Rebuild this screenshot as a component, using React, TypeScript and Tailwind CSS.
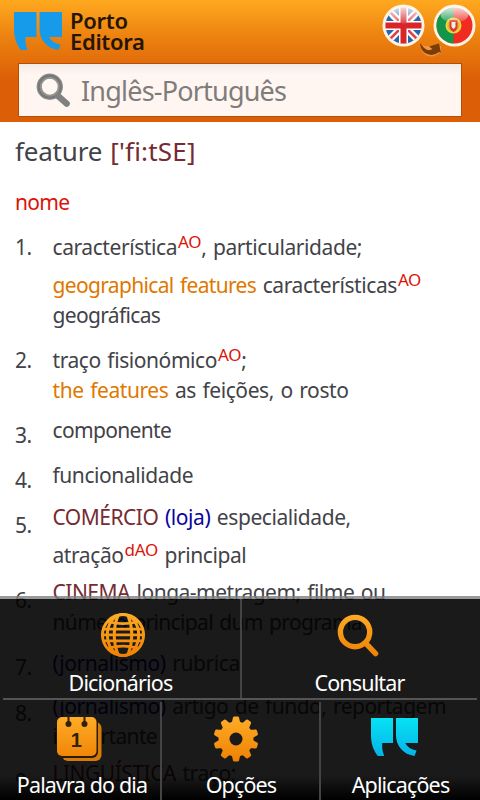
import type { ReactNode } from "react";

type Line = { space: string; content: ReactNode };
type Entry = { number: string; space: string; numberSpace: string; lines: Line[] };

const Mark = ({ children }: { children: ReactNode }) => (
  <sup className="top-0 ml-px align-[7px] text-[17px] leading-none tracking-[-0.3px] text-[#dc1408]">{children}</sup>
);
const Example = ({ children }: { children: ReactNode }) => (
  <span className="text-[#de7800]">{children}</span>
);
const Domain = ({ children }: { children: ReactNode }) => (
  <span className="tracking-[-0.5px] text-[#762b32]">{children}</span>
);
const Context = ({ children }: { children: ReactNode }) => (
  <span className="text-[#0c04a0]">{children}</span>
);
const Tight = ({ children }: { children: ReactNode }) => (
  <span className="tracking-[-0.66px]">{children}</span>
);

const entries: Entry[] = [
  {
    number: "1.",
    space: "",
    numberSpace: "",
    lines: [
      { space: "", content: <>característica<Mark>AO</Mark>, particularidade;</> },
      {
        space: "mt-2",
        content: <><Tight><Example>geographical features</Example></Tight> características<Mark>AO</Mark></>,
      },
      { space: "", content: <Tight>geográficas</Tight> },
    ],
  },
  {
    number: "2.",
    space: "mt-[15px]",
    numberSpace: "",
    lines: [
      { space: "", content: <>traço fisionómico<Mark>AO</Mark>;</> },
      { space: "", content: <><Example>the features</Example> as feições, o rosto</> },
    ],
  },
  {
    number: "3.",
    space: "mt-[10px]",
    numberSpace: "mt-[5px]",
    lines: [{ space: "", content: <Tight>componente</Tight> }],
  },
  { number: "4.", space: "mt-[10px]", numberSpace: "mt-[5px]", lines: [{ space: "", content: "funcionalidade" }] },
  {
    number: "5.",
    space: "mt-[7px]",
    numberSpace: "mt-2",
    lines: [
      { space: "", content: <><Domain>COMÉRCIO</Domain> <Context>(loja)</Context> especialidade,</> },
      { space: "mt-2", content: <>atração<Mark>dAO</Mark> principal</> },
    ],
  },
  {
    number: "6.",
    space: "mt-[7px]",
    numberSpace: "mt-2",
    lines: [
      { space: "", content: <><Domain>CINEMA</Domain> <span className="tracking-[-0.5px]">longa-metragem; filme ou</span></> },
      { space: "", content: <Tight>número principal dum programa</Tight> },
    ],
  },
  {
    number: "7.",
    space: "mt-[11px]",
    numberSpace: "mt-1",
    lines: [{ space: "", content: <><Context>(jornalismo)</Context> rubrica</> }],
  },
  {
    number: "8.",
    space: "mt-[9px]",
    numberSpace: "mt-[7px]",
    lines: [
      { space: "", content: <><Context>(jornalismo)</Context> <span className="tracking-[-0.5px]">artigo de fundo, reportagem</span></> },
      { space: "", content: <Tight>importante</Tight> },
    ],
  },
  {
    number: "9.",
    space: "mt-[7px]",
    numberSpace: "mt-2",
    lines: [{ space: "", content: <><Domain>LINGUÍSTICA</Domain> traço;</> }],
  },
];

function Quotes({ className, fill }: { className: string; fill: string }) {
  return (
    <svg className={className} viewBox="0 0 48 38" preserveAspectRatio="none" fill={fill}>
      <defs>
        <linearGradient id="cyan" gradientUnits="userSpaceOnUse" x1="0" y1="0" x2="0" y2="38">
          <stop stopColor="#08e2f4" />
          <stop offset="1" stopColor="#04b4e8" />
        </linearGradient>
      </defs>
      <path d="M0 0H22.5V25H11.5C11 30 12 34 13.5 38H7C2 32 0 25 0 17Z" />
      <path d="M25.5 0H48V25H35C37 29 41 31.500 46.500 32.500L44.500 38C33 36.500 25.500 28 25.500 17Z" />
    </svg>
  );
}

function Flags() {
  return (
    <svg className="h-[62px] w-[105px]" viewBox="375 0 105 62">
      <defs>
        <clipPath id="uk"><circle cx="403.500" cy="25.500" r="18" /></clipPath>
        <clipPath id="pt"><circle cx="454.500" cy="25.500" r="18" /></clipPath>
        <linearGradient id="gloss" x2="0" y2="1">
          <stop stopColor="#fff" stopOpacity=".85" />
          <stop offset="1" stopColor="#fff" stopOpacity=".15" />
        </linearGradient>
      </defs>
      <circle cx="403.500" cy="25.500" r="21" fill="#fff4e4" />
      <g clipPath="url(#uk)">
        <path d="M385 7h37v37h-37z" fill="#2866ab" />
        <path d="M386 8 421 43M421 8 386 43" stroke="#fff" strokeWidth="7" />
        <path d="M386 8 421 43M421 8 386 43" stroke="#df4548" strokeWidth="2.500" />
        <path d="M385 25.500h37M403.500 7v37" stroke="#fff" strokeWidth="9" />
        <path d="M385 25.500h37M403.500 7v37" stroke="#d92428" strokeWidth="6" />
      </g>
      <ellipse cx="403.500" cy="15" rx="14" ry="8.500" fill="url(#gloss)" />
      <circle cx="454.500" cy="25.500" r="21" fill="#fff4e4" />
      <g clipPath="url(#pt)">
        <path d="M436 7h37v37h-37z" fill="#ef2b22" />
        <path d="M436 7h17.500v37H436z" fill="#14964a" />
      </g>
      <circle cx="453.500" cy="25.500" r="7" fill="#d9b62c" stroke="#ecd43c" strokeWidth="2" />
      <path d="M449.500 20h8v7q-1 4-4 5-3-1-4-5z" fill="#df382e" />
      <path d="M451.500 22h4v5l-2 2-2-2z" fill="#e9eee9" />
      <ellipse cx="454.500" cy="14.500" rx="14" ry="8" fill="url(#gloss)" />
      <path d="M420 46q2 8 8 10 7 1.500 11-3l2 1V46z" fill="#f9bd80" opacity=".45" />
      <path d="M420 43q0 7 6 10.500 7 3.500 13-1.500l2 1-2-9.500-10 3 3.500 2.500q-6 4-12.500-6z" fill="#7b3d08" />
    </svg>
  );
}

function Header() {
  return (
    <header className="h-[122px] bg-linear-to-b from-[#ffa91f] via-[#ec820f] via-30% to-[#dc5f08] to-65%">
      <div className="flex h-[63px] justify-between">
        <div className="flex pl-[14px]">
          <Quotes className="mt-3 h-[38px] w-12" fill="#169bea" />
          <div className="mt-[10px] ml-2 text-[22px] leading-[21px] font-semibold tracking-[-0.3px] text-[#251504]">
            <p>Porto</p>
            <p>Editora</p>
          </div>
        </div>
        <Flags />
      </div>
      <div className="mx-[18px] flex h-[54px] items-center border border-[#b24f08] bg-linear-to-b from-[#f3ebe7] to-[#fff6f2] to-20%">
        <svg className="mt-1 ml-4 h-[38px] w-[38px]" viewBox="0 0 36 36" fill="none">
          <circle cx="14" cy="13" r="10" stroke="#929292" strokeWidth="5" />
          <circle cx="14" cy="13" r="10.500" stroke="#777" strokeWidth="2" />
          <path d="m22 22 8 7" stroke="#808080" strokeWidth="6" strokeLinecap="round" />
        </svg>
        <span className="mt-0.5 ml-2 text-[27px] tracking-[-0.8px] text-[#7f7c7a]">Inglês-Português</span>
      </div>
    </header>
  );
}

function Gradient() {
  return (
    <defs>
      <linearGradient id="orange" gradientUnits="userSpaceOnUse" x1="0" y1="0" x2="0" y2="46">
        <stop stopColor="#ffad28" />
        <stop offset="1" stopColor="#ee8003" />
      </linearGradient>
    </defs>
  );
}

function GlobeIcon() {
  return (
    <svg className="ml-0.5 h-[46px] w-[46px]" viewBox="0 0 46 46" fill="none" stroke="url(#orange)" strokeWidth="3">
      <Gradient />
      <circle cx="23" cy="23.500" r="21" />
      <ellipse cx="23" cy="23.500" rx="16" ry="21" />
      <path d="M18 3q-8 20 0 41M28 3q8 20 0 41" />
      <path d="M8 10q15 4 30 0M3.500 17.500h39v.1M2 23.500h42v.1M3.500 29.500h39v.1M8 37q15-4 30 0" strokeWidth="2.800" />
    </svg>
  );
}

function SearchIcon() {
  return (
    <svg className="mr-1 h-[46px] w-[46px]" viewBox="0 0 46 46" fill="none" stroke="url(#orange)">
      <circle cx="20" cy="20.500" r="15" strokeWidth="5.500" />
      <path d="m31 32 10 10.500" strokeWidth="5.500" strokeLinecap="round" />
    </svg>
  );
}

function CalendarIcon() {
  return (
    <svg className="mr-0.5 h-[46px] w-[46px]" viewBox="0 0 46 46">
      <rect x="6" y="6" width="39.500" height="39" rx="6" fill="#d67a08" />
      <rect x="1" y="1" width="41" height="41" rx="6" fill="#2a1a08" />
      <rect x="1" y="1" width="39.500" height="39" rx="5" fill="url(#orange)" />
      <path d="M12.500 0v8M28.500 0v8" stroke="#33210c" strokeWidth="2" />
      <circle cx="12.500" cy="8" r="3" fill="#33210c" />
      <circle cx="28.500" cy="8" r="3" fill="#33210c" />
      <text x="20" y="31" textAnchor="middle" fontSize="20" fontWeight="700" fill="#33210c" fontFamily="Liberation Sans">1</text>
    </svg>
  );
}

const teeth = [0, 36, 72, 108, 144, 180, 216, 252, 288, 324];

function GearIcon() {
  return (
    <svg className="mr-2.5 h-[46px] w-[46px]" viewBox="0 0 46 46">
      <mask id="gear">
        <circle cx="23" cy="23" r="17.500" fill="#fff" />
        {teeth.map((angle) => (
          <path key={angle} d="M18.500 8 20 1.500q.3-1 1.300-1h3.400q1 0 1.300 1L27.500 8z" fill="#fff" transform={`rotate(${angle} 23 23)`} />
        ))}
        <circle cx="23" cy="23" r="6.500" fill="#000" />
      </mask>
      <rect width="46" height="46" fill="url(#orange)" mask="url(#gear)" />
    </svg>
  );
}

function MenuItem({ icon, label, className }: { icon: ReactNode; label: string; className: string }) {
  return (
    <div className={`flex flex-col items-center text-[21.5px] leading-[30px] tracking-[-0.85px] text-white ${className}`}>
      {icon}
      <span className="whitespace-nowrap">{label}</span>
    </div>
  );
}

function Menu() {
  return (
    <nav className="absolute inset-x-0 bottom-0 h-[204px] border-t-3 border-[#808080]/80 bg-linear-to-b from-black/90 from-88% to-black bg-clip-padding">
      <div className="mx-[3px] flex h-[101px] border-b-2 border-[#555]">
        <MenuItem icon={<GlobeIcon />} label="Dicionários" className="w-[239px] border-r-2 border-[#444] pt-[13px] [&>span]:mt-[11px] [&>span]:mr-0.5" />
        <MenuItem icon={<SearchIcon />} label="Consultar" className="flex-1 pt-[13px] [&>span]:mt-[11px]" />
      </div>
      <div className="flex h-[100px] pt-0.5">
        <MenuItem icon={<CalendarIcon />} label="Palavra do dia" className="w-[162px] border-r-2 border-[#444] pt-[14px] [&>span]:mt-2 [&>span]:ml-1" />
        <MenuItem icon={<GearIcon />} label="Opções" className="w-[159px] border-r-2 border-[#444] pt-[14px] [&>span]:mt-2 [&>span]:ml-px" />
        <MenuItem
          icon={<Quotes className="mt-0.5 mr-3 mb-1.5 h-[38px] w-[47px]" fill="url(#cyan)" />}
          label="Aplicações"
          className="flex-1 pt-[14px] [&>span]:mt-2"
        />
      </div>
    </nav>
  );
}

export default function App() {
  return (
    <div className="relative h-[800px] w-[480px] overflow-hidden bg-white font-['Noto_Sans','Open_Sans',sans-serif]">
      <Header />
      <main className="px-[15px] text-[21px] leading-[30px] tracking-[-0.42px] [word-spacing:1.5px] whitespace-nowrap text-[#424348]">
        <h1 className="pt-[13px] text-[26px] leading-8 tracking-[-0.2px]">
          feature <span className="tracking-[0.2px] text-[#762b32]">['fi:tSE]</span>
        </h1>
        <h2 className="mt-5 tracking-[-0.7px] text-[#dc1408]">nome</h2>
        <ol className="mt-[15px]">
          {entries.map((entry) => (
            <li key={entry.number} className={`flex ${entry.space}`}>
              <span className={`w-[37.5px] shrink-0 ${entry.numberSpace}`}>{entry.number}</span>
              <div>
                {entry.lines.map((line, i) => (
                  <p key={i} className={`h-[30px] ${line.space}`}>{line.content}</p>
                ))}
              </div>
            </li>
          ))}
        </ol>
      </main>
      <Menu />
    </div>
  );
}
